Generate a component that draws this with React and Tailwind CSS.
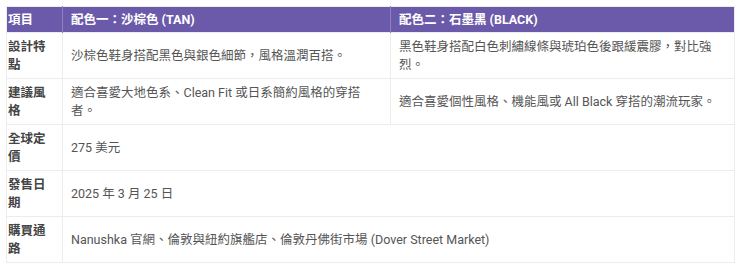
import React from 'react';

const rows = [
  {
    label: '設計特點',
    tan: '沙棕色鞋身搭配黑色與銀色細節，風格溫潤百搭。',
    black: '黑色鞋身搭配白色刺繡線條與琥珀色後跟緩震膠，對比強烈。',
  },
  {
    label: '建議風格',
    tan: '適合喜愛大地色系、Clean Fit 或日系簡約風格的穿搭者。',
    black: '適合喜愛個性風格、機能風或 All Black 穿搭的潮流玩家。',
  },
  { label: '全球定價', span: '275 美元' },
  { label: '發售日期', span: '2025 年 3 月 25 日' },
  { label: '購買通路', span: 'Nanushka 官網、倫敦與紐約旗艦店、倫敦丹佛街市場 (Dover Street Market)' },
];

const App = () => {
  return (
    <div className="bg-white w-[740px] h-[266px] pt-[6px] pl-[6px] font-['Roboto','Noto_Sans_CJK_TC',sans-serif] text-[12.5px] leading-[18px]">
      <table className="table-fixed border-collapse w-[728px] border border-[#ececec]">
        <colgroup>
          <col className="w-[56px]" />
          <col className="w-[328px]" />
          <col className="w-[344px]" />
        </colgroup>
        <thead>
          <tr className="bg-[#6a5aa9] text-white h-[26px]">
            <th className="text-left font-bold pl-[1px] pr-2 border-r border-[#8d80c2]">項目</th>
            <th className="text-left font-bold px-2 border-r border-[#8d80c2]">配色一：沙棕色 (TAN)</th>
            <th className="text-left font-bold px-2">配色二：石墨黑 (BLACK)</th>
          </tr>
        </thead>
        <tbody>
          {rows.map((r, i) => (
            <tr key={i} className="border-t border-[#ececec]">
              <td className="font-bold text-[#444] pl-[1px] pr-2 pt-[5px] pb-[4px] border-r border-[#ececec] align-middle">
                {r.label}
              </td>
              {r.span ? (
                <td colSpan={2} className="text-[#555] px-2 align-middle">{r.span}</td>
              ) : (
                <>
                  <td className="text-[#555] px-2 border-r border-[#ececec] align-middle">{r.tan}</td>
                  <td className="text-[#555] px-2 align-middle">{r.black}</td>
                </>
              )}
            </tr>
          ))}
        </tbody>
      </table>
    </div>
  );
};

export default App;
